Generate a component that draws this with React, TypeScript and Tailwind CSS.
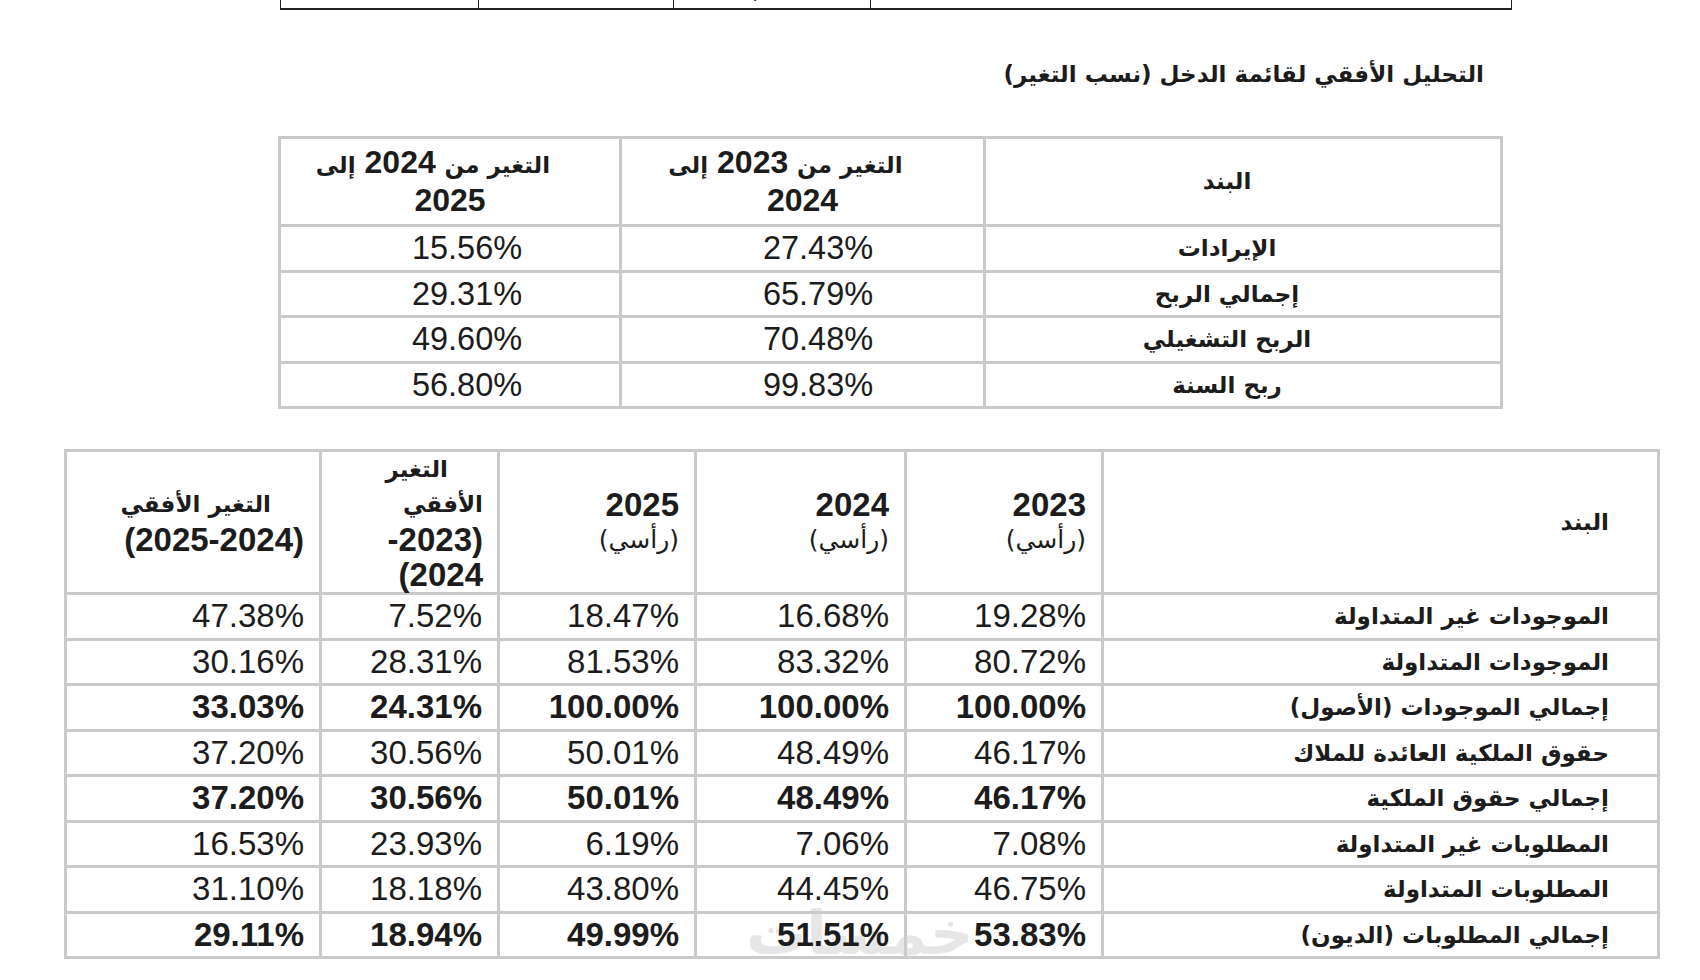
import React from "react";

const small = [
  ["الإيرادات", "27.43%", "15.56%"],
  ["إجمالي الربح", "65.79%", "29.31%"],
  ["الربح التشغيلي", "70.48%", "49.60%"],
  ["ربح السنة", "99.83%", "56.80%"],
];

const big: [string, string, string, string, string, string, boolean][] = [
  ["الموجودات غير المتداولة", "19.28%", "16.68%", "18.47%", "7.52%", "47.38%", false],
  ["الموجودات المتداولة", "80.72%", "83.32%", "81.53%", "28.31%", "30.16%", false],
  ["إجمالي الموجودات (الأصول)", "100.00%", "100.00%", "100.00%", "24.31%", "33.03%", true],
  ["حقوق الملكية العائدة للملاك", "46.17%", "48.49%", "50.01%", "30.56%", "37.20%", false],
  ["إجمالي حقوق الملكية", "46.17%", "48.49%", "50.01%", "30.56%", "37.20%", true],
  ["المطلوبات غير المتداولة", "7.08%", "7.06%", "6.19%", "23.93%", "16.53%", false],
  ["المطلوبات المتداولة", "46.75%", "44.45%", "43.80%", "18.18%", "31.10%", false],
  ["إجمالي المطلوبات (الديون)", "53.83%", "51.51%", "49.99%", "18.94%", "29.11%", true],
];

const cell = "border-[3px] border-[#cacaca] p-0 align-middle";
const ar = "font-['DejaVu_Sans'] font-bold text-[23px]";

export default function App() {
  return (
    <div className="relative w-[1700px] h-[980px] overflow-hidden bg-white text-[#1c1c1c] font-['Liberation_Sans','DejaVu_Sans',sans-serif]">
      {/* watermark */}
      <div className="absolute left-[746px] top-[898px] text-[60px] leading-[70px] text-[#e6e6e6] font-['DejaVu_Sans'] font-bold select-none">
        خمسات
      </div>

      {/* top table fragment */}
      <div
        dir="rtl"
        className="relative ml-[280px] -mt-[36px] flex h-[46px] w-[1232px] border-x border-b-2 border-[#222]"
      >
        <div className="flex w-[642px] items-center border-l border-[#222] pr-[80px] text-[24px] font-bold font-['DejaVu_Sans']">
          ربح السنة (صافي الدخل)
        </div>
        <div className="flex w-[197px] items-center justify-center border-l border-[#222] text-[30px]">
          1,250
        </div>
        <div className="flex w-[196px] items-center justify-center border-l border-[#222] text-[30px]">
          625
        </div>
        <div className="flex w-[197px] items-center justify-center text-[30px]">312</div>
      </div>

      {/* title */}
      <div dir="rtl" className="relative mt-[47px] h-[34px] pr-[216px] text-[23px] leading-[34px] font-bold font-['DejaVu_Sans']">
        التحليل الأفقي لقائمة الدخل (نسب التغير)
      </div>

      {/* small table */}
      <table dir="rtl" className="relative ml-[278px] mt-[45px] w-[1222px] table-fixed border-collapse">
        <colgroup>
          <col className="w-[517px]" />
          <col className="w-[364px]" />
          <col className="w-[341px]" />
        </colgroup>
        <tbody>
          <tr className="h-[88px]">
            <td className={`${cell} text-center`}>
              <div className={`${ar} pr-[32px]`}>البند</div>
            </td>
            <td className={`${cell} text-center font-bold text-[32px] leading-[35px]`}>
              <div className="pr-[34px]">
                <span className={ar}>التغير من</span> 2023 <span className={ar}>إلى</span>
              </div>
              <div>2024</div>
            </td>
            <td className={`${cell} text-center font-bold text-[32px] leading-[35px]`}>
              <div className="pr-[34px]">
                <span className={ar}>التغير من</span> 2024 <span className={ar}>إلى</span>
              </div>
              <div>2025</div>
            </td>
          </tr>
          {small.map((r) => (
            <tr key={r[0]} className="h-[45.5px]">
              <td className={`${cell} text-center`}>
                <div className={`${ar} pr-[32px]`}>{r[0]}</div>
              </td>
              <td className={`${cell} text-center text-[32.5px] leading-[36px]`}>
                <div className="pl-[31px]">{r[1]}</div>
              </td>
              <td className={`${cell} text-center text-[32.5px] leading-[36px]`}>
                <div className="pl-[34px]">{r[2]}</div>
              </td>
            </tr>
          ))}
        </tbody>
      </table>

      {/* big table */}
      <table dir="rtl" className="relative ml-[64px] mt-[40px] w-[1593px] table-fixed border-collapse">
        <colgroup>
          <col className="w-[556px]" />
          <col className="w-[197px]" />
          <col className="w-[210px]" />
          <col className="w-[197px]" />
          <col className="w-[178px]" />
          <col className="w-[255px]" />
        </colgroup>
        <tbody>
          <tr className="h-[137px]">
            <td className={`${cell} pr-[48px] text-right`}>
              <div className={ar}>البند</div>
            </td>
            {["2023", "2024", "2025"].map((y) => (
              <td key={y} className={`${cell} pr-[15px] text-right text-[33px] leading-[35px]`}>
                <div className="font-bold">{y}</div>
                <div className="font-['DejaVu_Sans'] text-[25px] leading-[35px]">(رأسي)</div>
              </td>
            ))}
            <td className={`${cell} pr-[14px] text-right text-[33px] leading-[35px] font-bold`}>
              <div className={`${ar} pr-[35px] leading-[35px]`}>التغير</div>
              <div className={`${ar} leading-[35px]`}>الأفقي</div>
              <div dir="ltr" className="text-right">-2023)</div>
              <div dir="ltr" className="text-right">(2024</div>
            </td>
            <td className={`${cell} pr-[15px] text-right text-[33px] leading-[35px] font-bold`}>
              <div className={`${ar} pr-[33px] leading-[35px]`}>التغير الأفقي</div>
              <div dir="ltr" className="text-right">(2025-2024)</div>
            </td>
          </tr>
          {big.map((r) => (
            <tr key={r[0]} className="h-[45.5px]">
              <td className={`${cell} pr-[48px] text-right`}>
                <div className={ar}>{r[0]}</div>
              </td>
              {[r[1], r[2], r[3], r[4], r[5]].map((v, i) => (
                <td
                  key={i}
                  className={`${cell} pr-[15px] text-right text-[33px] leading-[36px] ${r[6] ? "font-bold" : ""}`}
                >
                  {v}
                </td>
              ))}
            </tr>
          ))}
        </tbody>
      </table>
    </div>
  );
}
